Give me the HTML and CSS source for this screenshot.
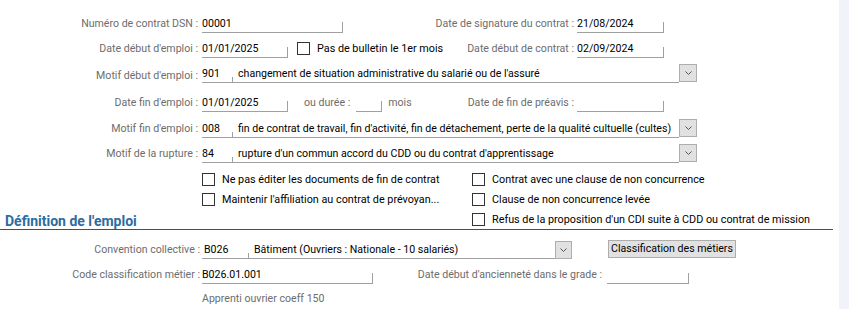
FILE: index.html
```html
<!DOCTYPE html>
<html lang="fr">
<head>
<meta charset="utf-8">
<title>Contrat</title>
<link rel="stylesheet" href="styles.css">
</head>
<body>
<div class="page">
  <main class="form">
    <div class="row r1 wide">
      <span class="lbl">Numéro de contrat DSN :</span>
      <span class="fld w-num">00001</span>
      <span class="rlbl">Date de signature du contrat :</span>
      <span class="fld w-rdate">21/08/2024</span>
    </div>
    <div class="row wide">
      <span class="lbl">Date début d'emploi :</span>
      <span class="fld w-date">01/01/2025</span>
      <span class="check inline"><span class="cb"></span><span>Pas de bulletin le 1er mois</span></span>
      <span class="rlbl">Date début de contrat :</span>
      <span class="fld w-rdate">02/09/2024</span>
    </div>
    <div class="row">
      <span class="lbl low">Motif début d'emploi :</span>
      <span class="fld code">901</span>
      <span class="fld desc w-desc">changement de situation administrative du salarié ou de l'assuré</span>
      <span class="dd"><svg width="7" height="4" viewBox="0 0 7 4"><polyline points="0.5,0.5 3.5,3.5 6.5,0.5" fill="none" stroke="#555" stroke-width="1"/></svg></span>
    </div>
    <div class="row r4 wide">
      <span class="lbl">Date fin d'emploi :</span>
      <span class="fld w-date">01/01/2025</span>
      <span class="mid">ou durée :</span>
      <span class="fld w-small"></span>
      <span class="mid2">mois</span>
      <span class="rlbl">Date de fin de préavis :</span>
      <span class="fld w-rdate"></span>
    </div>
    <div class="row r5">
      <span class="lbl">Motif fin d'emploi :</span>
      <span class="fld code">008</span>
      <span class="fld desc w-desc">fin de contrat de travail, fin d'activité, fin de détachement, perte de la qualité cultuelle (cultes)</span>
      <span class="dd"><svg width="7" height="4" viewBox="0 0 7 4"><polyline points="0.5,0.5 3.5,3.5 6.5,0.5" fill="none" stroke="#555" stroke-width="1"/></svg></span>
    </div>
    <div class="row">
      <span class="lbl">Motif de la rupture :</span>
      <span class="fld code">84</span>
      <span class="fld desc w-desc">rupture d'un commun accord du CDD ou du contrat d'apprentissage</span>
      <span class="dd"><svg width="7" height="4" viewBox="0 0 7 4"><polyline points="0.5,0.5 3.5,3.5 6.5,0.5" fill="none" stroke="#555" stroke-width="1"/></svg></span>
    </div>

    <div class="checks">
      <div class="crow">
        <span class="check c-left"><span class="cb"></span><span>Ne pas éditer les documents de fin de contrat</span></span>
        <span class="check"><span class="cb"></span><span>Contrat avec une clause de non concurrence</span></span>
      </div>
      <div class="crow">
        <span class="check c-left"><span class="cb"></span><span>Maintenir l'affiliation au contrat de prévoyan...</span></span>
        <span class="check"><span class="cb"></span><span>Clause de non concurrence levée</span></span>
      </div>
      <div class="crow sec">
        <h2 class="heading">Définition de l'emploi</h2>
        <span class="check"><span class="cb"></span><span>Refus de la proposition d'un CDI suite à CDD ou contrat de mission</span></span>
      </div>
    </div>

    <div class="row r-conv">
      <span class="lbl lbl2">Convention collective :</span>
      <span class="fld code2">B026</span>
      <span class="fld desc w-desc2">Bâtiment (Ouvriers : Nationale - 10 salariés)</span>
      <span class="dd dd2"><svg width="7" height="4" viewBox="0 0 7 4"><polyline points="0.5,0.5 3.5,3.5 6.5,0.5" fill="none" stroke="#555" stroke-width="1"/></svg></span>
      <span class="btn">Classification des métiers</span>
    </div>
    <div class="row r-class">
      <span class="lbl lbl2">Code classification métier :</span>
      <span class="fld w-class">B026.01.001</span>
      <span class="rlbl rlbl2">Date début d'ancienneté dans le grade :</span>
      <span class="fld w-grade"></span>
    </div>
    <div class="note">Apprenti ouvrier coeff 150</div>
  </main>
  <aside class="strip"></aside>
</div>
</body>
</html>
```

FILE: styles.css
```css
* { box-sizing: border-box; }
html, body { margin: 0; padding: 0; background: #fff; }
body {
  width: 849px;
  height: 309px;
  overflow: hidden;
  font-family: Roboto, "Liberation Sans", Arial, sans-serif;
  font-size: 10.6px;
  color: #000;
}
.page { display: flex; height: 309px; }
.form { flex: 1; padding-top: 15px; }
.strip { width: 10px; background: #f2f2fb; }

.row { display: flex; align-items: flex-end; height: 25px; white-space: nowrap; }
.wide { width: 664px; }
.r1 { height: 18px; }
.r4 { height: 29px; }
.r5 { height: 26px; }

.lbl {
  flex-shrink: 0;
  width: 198px;
  margin-right: 4px;
  text-align: right;
  color: #6d6d6d;
  line-height: 17px;
  padding-bottom: 1px;
}
.lbl.low { align-self: flex-end; margin-bottom: -2px; }
.lbl2 { width: 200px; margin-right: 2px; }

.rlbl {
  flex: 1;
  text-align: right;
  color: #6d6d6d;
  line-height: 17px;
  padding-bottom: 1px;
  margin-right: 3px;
}
.rlbl2 { margin-right: 5px; }

.fld {
  flex-shrink: 0;
  height: 18px;
  line-height: 17px;
  border-bottom: 1px solid #a0a0a0;
  background: linear-gradient(#a0a0a0, #a0a0a0) right bottom / 1px 10px no-repeat;
  overflow: hidden;
}
.w-num { width: 141px; }
.w-date { width: 86px; }
.w-rdate { width: 87px; }
.w-small { width: 26px; }
.w-class { width: 171px; }
.w-grade { width: 82px; }
.code { width: 31px; background-size: 1px 5px; }
.code2 { width: 47px; padding-left: 2px; background-size: 1px 5px; }
.desc { background: none; padding-left: 5px; }
.w-desc { width: 446px; }
.w-desc2 { width: 306px; }

.dd {
  flex-shrink: 0;
  width: 18px;
  height: 18px;
  margin-bottom: 1px;
  border: 1px solid #adadad;
  background: #e1e1e1;
  display: flex;
  align-items: center;
  justify-content: center;
}
.dd2 { width: 17px; margin-bottom: 0; }

.mid { color: #6d6d6d; margin-left: 16px; margin-right: 6px; line-height: 17px; padding-bottom: 1px; }
.mid2 { color: #6d6d6d; margin-left: 6px; line-height: 17px; padding-bottom: 1px; }

.check { display: flex; align-items: center; gap: 7px; line-height: 17px; font-size: 10.8px; }
.check.inline { margin-left: 9px; padding-bottom: 1px; }
.cb {
  width: 13px;
  height: 13px;
  border: 1px solid #333;
  background: #fff;
  flex-shrink: 0;
}

.checks { margin-top: 6px; }
.crow { display: flex; align-items: center; height: 20px; padding-left: 202px; white-space: nowrap; }
.c-left { width: 270px; }
.sec {
  width: 833px;
  padding-left: 0;
  height: 21px;
  border-bottom: 1px solid #1f5d7c;
}
.heading {
  margin: 0 0 -1px;
  width: 472px;
  padding-left: 5px;
  align-self: flex-end;
  font-size: 14px;
  font-weight: bold;
  line-height: 17px;
  color: #2d6ba1;
}

.r-conv { height: 29px; }
.btn {
  flex-shrink: 0;
  margin-left: 36px;
  margin-bottom: 1px;
  width: 128px;
  height: 18px;
  border: 1px solid #adadad;
  background: #e1e1e1;
  text-align: center;
  line-height: 16px;
  color: #000;
}
.r-class { height: 25px; width: 689px; }

.note {
  margin-top: 6px;
  padding-left: 202px;
  color: #6d6d6d;
  line-height: 18px;
}
```
